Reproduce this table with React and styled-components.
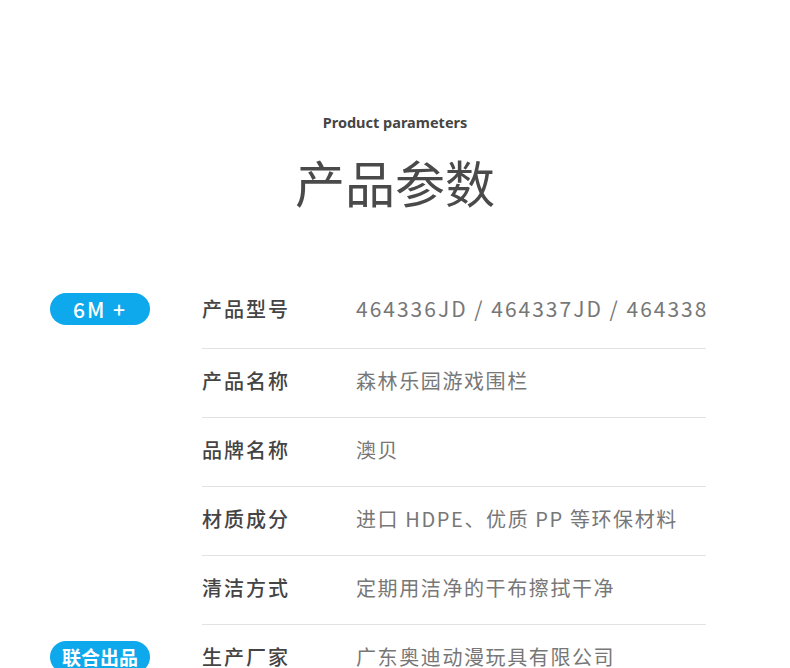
import React from "react"
import styled, { createGlobalStyle } from "styled-components"

const GlobalStyle = createGlobalStyle`
  html, body {
    margin: 0;
    padding: 0;
    background: #ffffff;
  }
  body {
    font-family: "Noto Sans CJK SC", "Noto Sans", sans-serif;
  }
`

const Page = styled.div`
  width: 790px;
  height: 668px;
  overflow: hidden;
  background: #fff;
`

const Heading = styled.header`
  display: flex;
  flex-direction: column;
  align-items: center;
  padding-top: 111px;
`

const Subtitle = styled.div`
  font-family: "Noto Sans", "Open Sans", sans-serif;
  font-weight: 700;
  font-size: 14.5px;
  line-height: 22px;
  color: #454545;
`

const Title = styled.h1`
  margin: 20px 0 0;
  font-family: "Noto Sans CJK SC", sans-serif;
  font-weight: 400;
  font-size: 50px;
  line-height: 56px;
  color: #4a4a4a;
`

const Table = styled.div`
  display: flex;
  flex-direction: column;
  margin-top: 71px;
`

const Row = styled.div`
  display: flex;
  align-items: stretch;
  height: 69px;
`

// the first row sits a little higher in its band than the others
const BadgeSlot = styled.div`
  width: 152px;
  margin-left: 50px;
  padding-bottom: ${(p) => (p.$first ? "11px" : "6px")};
  display: flex;
  align-items: center;
`

const Badge = styled.span`
  display: inline-flex;
  align-items: center;
  justify-content: center;
  width: 100px;
  height: 32px;
  border-radius: 16px;
  background: #0ea8ec;
  color: #fff;
  font-size: ${(p) => (p.$cjk ? "19px" : "21px")};
  font-weight: ${(p) => (p.$cjk ? 700 : 500)};
  letter-spacing: ${(p) => (p.$cjk ? "0px" : "2px")};
`

const Cell = styled.div`
  width: 504px;
  padding-bottom: ${(p) => (p.$first ? "12px" : "6px")};
  display: flex;
  align-items: center;
  border-bottom: ${(p) => (p.$last ? "none" : "1px solid #e2e2e2")};
`

const Label = styled.span`
  width: 154px;
  flex: none;
  font-size: 20px;
  font-weight: 500;
  letter-spacing: 2px;
  color: #444;
`

const Value = styled.span`
  font-size: ${(p) => (p.$code ? "21px" : "20px")};
  font-weight: 400;
  letter-spacing: ${(p) => (p.$code ? "2px" : "1.6px")};
  color: #777;
  white-space: nowrap;
`

const rows = [
  { label: "产品型号", value: "464336JD / 464337JD / 464338", code: true, badge: "6M +" },
  { label: "产品名称", value: "森林乐园游戏围栏" },
  { label: "品牌名称", value: "澳贝" },
  { label: "材质成分", value: "进口 HDPE、优质 PP 等环保材料" },
  { label: "清洁方式", value: "定期用洁净的干布擦拭干净" },
  { label: "生产厂家", value: "广东奥迪动漫玩具有限公司", badge: "联合出品", cjk: true },
]

export default function App() {
  return (
    <Page>
      <GlobalStyle />
      <Heading>
        <Subtitle>Product parameters</Subtitle>
        <Title>产品参数</Title>
      </Heading>
      <Table>
        {rows.map((r, i) => (
          <Row key={r.label}>
            <BadgeSlot $first={i === 0}>
              {r.badge && <Badge $cjk={r.cjk}>{r.badge}</Badge>}
            </BadgeSlot>
            <Cell $first={i === 0} $last={i === rows.length - 1}>
              <Label>{r.label}</Label>
              <Value $code={r.code}>{r.value}</Value>
            </Cell>
          </Row>
        ))}
      </Table>
    </Page>
  )
}
